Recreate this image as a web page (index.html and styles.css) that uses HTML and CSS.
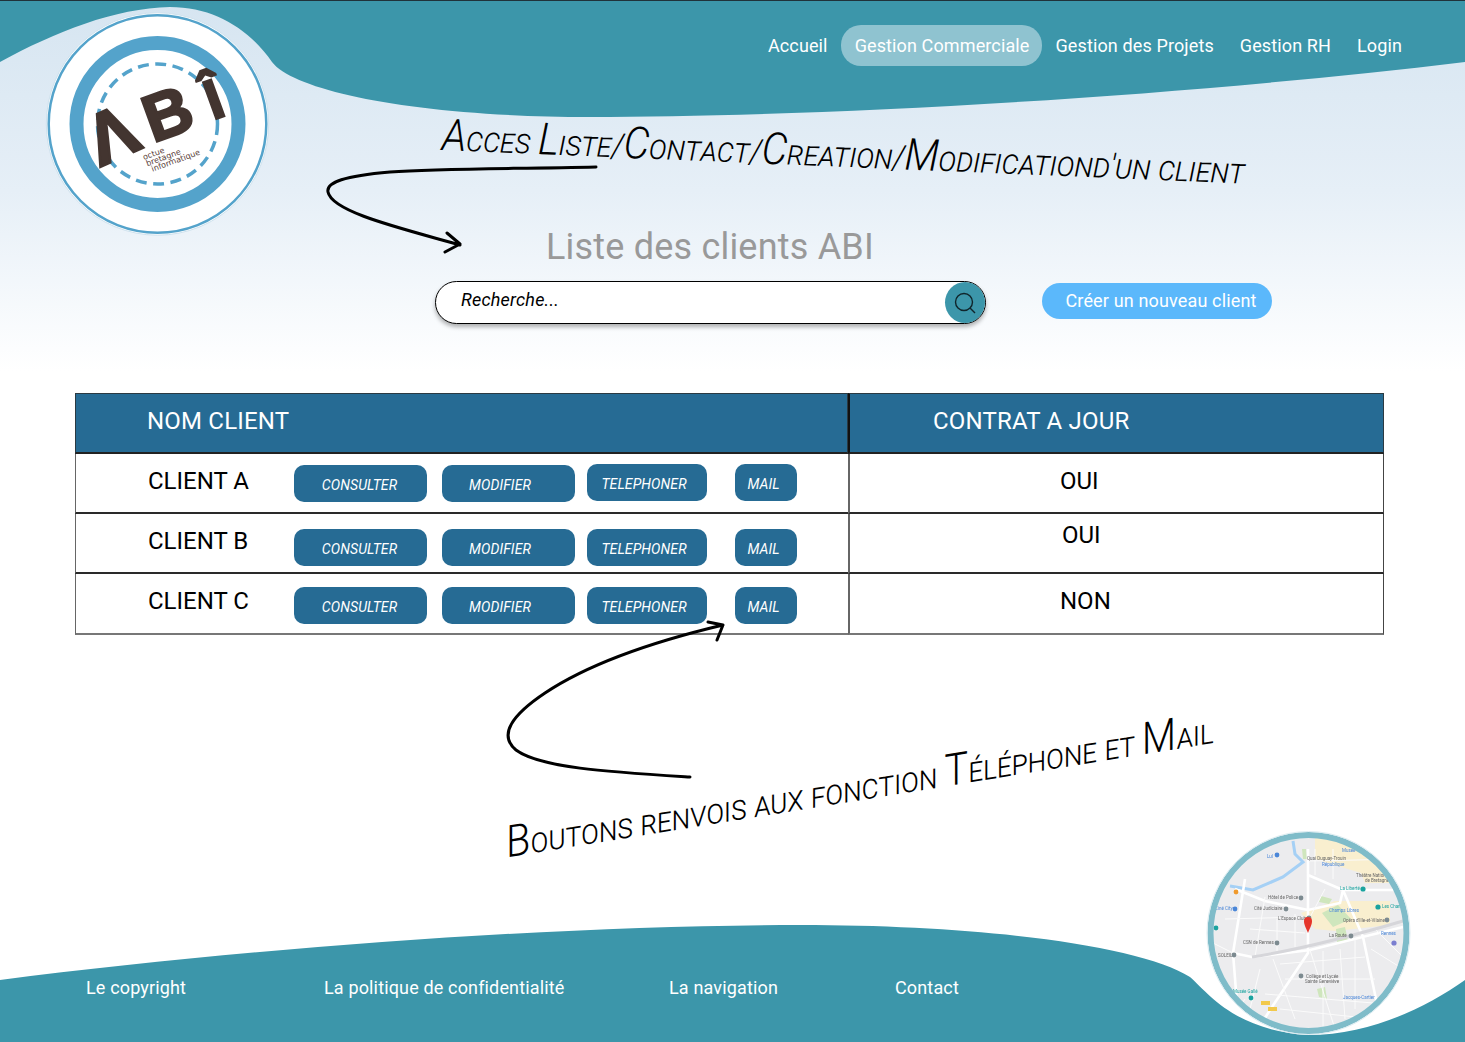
FILE: index.html
```html
<!DOCTYPE html>
<html>
<head>
	<meta charset="utf-8"/>
	<title>Liste des clients ABI</title>
	<link rel="stylesheet" href="styles.css">
</head>
<body>
<div class="page">
	<!-- background waves -->
	<svg class="canvas" width="1465" height="1042" viewBox="0 0 1465 1042">
		<path class="wave" d="M0 62 C55 32 115 8 170 7 C215 7 250 30 272 62 C295 92 420 117 590 117 C800 117 1150 100 1465 62 L1465 0 L0 0 Z"/>
		<path class="wave" d="M0 980 C250 948 560 925 800 925 C980 925 1140 945 1190 977 C1210 995 1235 1030 1308 1035 C1370 1035 1425 1008 1465 980 L1465 1042 L0 1042 Z"/>
	</svg>

	<header class="topbar">
		<nav class="nav">
			<a class="nav-link">Accueil</a>
			<a class="nav-link active">Gestion Commerciale</a>
			<a class="nav-link">Gestion des Projets</a>
			<a class="nav-link">Gestion RH</a>
			<a class="nav-link">Login</a>
		</nav>
	</header>

	<main class="content">
		<h1 class="title">Liste des clients ABI</h1>
		<div class="toolbar">
			<div class="search">
				<span class="search-text">Recherche...</span>
				<span class="search-btn">
					<svg width="24" height="24" viewBox="0 0 24 24"><circle cx="11" cy="11" r="8.5"/><path d="M17 17 L22 22"/></svg>
				</span>
			</div>
			<a class="create-btn">Créer un nouveau client</a>
		</div>

		<table class="clients">
			<thead>
				<tr>
					<th class="col-name">NOM CLIENT</th>
					<th class="col-contract">CONTRAT A JOUR</th>
				</tr>
			</thead>
			<tbody>
				<tr class="row-a">
					<td class="col-name">
						<div class="client-line">
							<span class="client-name">CLIENT A</span>
							<a class="btn btn-wide">CONSULTER</a>
							<a class="btn btn-wide btn-mod">MODIFIER</a>
							<a class="btn btn-tel">TELEPHONER</a>
							<a class="btn btn-mail">MAIL</a>
						</div>
					</td>
					<td class="col-contract">OUI</td>
				</tr>
				<tr class="row-b">
					<td class="col-name">
						<div class="client-line">
							<span class="client-name">CLIENT B</span>
							<a class="btn btn-wide">CONSULTER</a>
							<a class="btn btn-wide btn-mod">MODIFIER</a>
							<a class="btn btn-tel">TELEPHONER</a>
							<a class="btn btn-mail">MAIL</a>
						</div>
					</td>
					<td class="col-contract">OUI</td>
				</tr>
				<tr class="row-c">
					<td class="col-name">
						<div class="client-line">
							<span class="client-name">CLIENT C</span>
							<a class="btn btn-wide">CONSULTER</a>
							<a class="btn btn-wide btn-mod">MODIFIER</a>
							<a class="btn btn-tel">TELEPHONER</a>
							<a class="btn btn-mail">MAIL</a>
						</div>
					</td>
					<td class="col-contract">NON</td>
				</tr>
			</tbody>
		</table>
	</main>

	<footer class="footer">
		<a class="foot-link foot-copy">Le copyright</a>
		<a class="foot-link foot-policy">La politique de confidentialité</a>
		<a class="foot-link foot-nav">La navigation</a>
		<a class="foot-link">Contact</a>
	</footer>

	<!-- logo -->
	<svg class="logo" width="228" height="228" viewBox="0 0 228 228">
		<circle cx="113.5" cy="114" r="111.2" fill="#fff" stroke="#cfe2ee" stroke-width="1"/>
		<circle cx="113.5" cy="114" r="108.8" fill="#fff" stroke="#54a3cb" stroke-width="2.5"/>
		<circle cx="113.5" cy="114" r="81" fill="#fff" stroke="#54a3cb" stroke-width="14"/>
		<circle cx="113.5" cy="114" r="60" fill="none" stroke="#54a3cb" stroke-width="3.5" stroke-dasharray="11 6.5"/>
		<text class="logo-big" transform="translate(56 157) rotate(-24)" font-size="72">Λ</text>
		<text class="logo-big" transform="translate(109 133) rotate(-20)" font-size="66">B</text>
		<text class="logo-big" transform="translate(169 110) rotate(-20)" font-size="56">Î</text>
		<g class="logo-small" transform="translate(100 150) rotate(-20)">
			<text x="0" y="0">octue</text>
			<text x="1" y="7">bretagne</text>
			<text x="4" y="14">informatique</text>
		</g>
	</svg>

	<!-- map -->
	<svg class="map" width="208" height="208" viewBox="0 0 208 208">
		<defs>
			<clipPath id="map-clip"><circle cx="103.5" cy="104" r="98"/></clipPath>
		</defs>
		<g class="map-inner" clip-path="url(#map-clip)">
			<rect width="208" height="208" fill="#ececee"/>
			<path d="M110 8 L190 8 L190 54 L160 54 L156 44 L110 30 Z" fill="#f9efcf"/>
			<path d="M96 84 L130 72 L185 72 L185 96 L130 102 L110 100 Z" fill="#f9efcf"/>
			<path d="M117 84 L133 76 L146 90 L128 98 Z M116 67 L127 70 L124 75 L114 73 Z M131 100 L140 98 L143 112 L132 113 Z M112 160 L120 158 L122 170 L114 168 Z M97 20 L101 20 L102 30 L98 30 Z" fill="#cfe6bd"/>
			<path class="map-water" d="M25 57 L48 61 L78 48 L98 33 L90 25 L88 12"/>
			<path class="map-road-big" d="M103 20 L103 124 L65 181 L48 208 M28 124 L47 128 L105 121 L198 98 M103 46 L138 61 L158 108 L172 175 M138 61 L198 61 M103 81 L135 74 L138 61 M30 60 L60 72 L103 81 M40 50 L28 124 L34 200"/>
			<path class="map-road" d="M60 68 L50 128 M68 130 L90 190 M105 121 L130 200 M150 110 L150 180 M0 110 L28 124 M80 150 L170 150 M60 165 L180 175 M103 32 L200 30 M170 100 L200 130 M20 90 L100 88 M40 170 L20 200 M72 90 L72 122 M90 85 L90 118 M118 122 L118 200 M135 120 L140 190 M75 135 L160 128 M75 180 L170 190 M110 20 L110 46 M128 20 L128 50 M45 100 L100 104 M55 140 L40 200 M120 60 L104 90 M166 120 L198 140"/>
			<path d="M47 128 Q110 118 198 92" fill="none" stroke="#d6d6da" stroke-width="3"/>
			<text class="map-label map-blue" x="62" y="29">Lul</text>
			<text class="map-label" x="102" y="31">Quai Duguay-Trouin</text>
			<text class="map-label map-blue" x="117" y="37">République</text>
			<text class="map-label map-blue" x="137" y="23">Musée</text>
			<text class="map-label" x="151" y="48">Théâtre National</text>
			<text class="map-label" x="160" y="53">de Bretagne</text>
			<text class="map-label map-teal" x="135" y="61">La Liberté</text>
			<text class="map-label" x="63" y="70">Hôtel de Police</text>
			<text class="map-label" x="49" y="81">Cité Judiciaire</text>
			<text class="map-label" x="73" y="91">L'Espace Clubs</text>
			<text class="map-label map-blue" x="124" y="83">Champs Libres</text>
			<text class="map-label map-teal" x="177" y="79">Les Champs</text>
			<text class="map-label" x="138" y="93">Opéra d'Ille-et-Vilaine</text>
			<text class="map-label" x="124" y="108">La Route</text>
			<text class="map-label map-blue" x="176" y="106">Rennes</text>
			<text class="map-label" x="38" y="115">CSN de Rennes</text>
			<text class="map-label" x="13" y="128">SOLEIL</text>
			<text class="map-label" x="101" y="149">Collège et Lycée</text>
			<text class="map-label" x="100" y="154">Sainte Geneviève</text>
			<text class="map-label map-blue" x="138" y="170">Jacques-Cartier</text>
			<text class="map-label map-teal" x="28" y="164">Musée Gallé</text>
			<text class="map-label map-blue" x="10" y="81">Ciné City</text>
			<circle cx="72" cy="26" r="2.4" fill="#4a86d8"/>
			<circle cx="158" cy="60" r="2.6" fill="#1aa39f"/>
			<circle cx="173" cy="78" r="2.6" fill="#1aa39f"/>
			<circle cx="31" cy="63" r="2.4" fill="#f09a2d"/>
			<circle cx="30" cy="80" r="2.4" fill="#4a86d8"/>
			<circle cx="96" cy="69" r="2.4" fill="#7c8a90"/>
			<circle cx="81" cy="80" r="2.4" fill="#7c8a90"/>
			<circle cx="104" cy="89" r="2.4" fill="#7c8a90"/>
			<circle cx="182" cy="91" r="2.4" fill="#7c8a90"/>
			<circle cx="146" cy="107" r="2.4" fill="#7c8a90"/>
			<circle cx="72" cy="114" r="2.4" fill="#7c8a90"/>
			<circle cx="29" cy="126" r="2.4" fill="#7c8a90"/>
			<circle cx="96" cy="147" r="2.4" fill="#7c8a90"/>
			<circle cx="189" cy="114" r="2.6" fill="#7b7fd0"/>
			<circle cx="46" cy="169" r="2.4" fill="#1aa39f"/>
			<circle cx="11" cy="99" r="2.4" fill="#1aa39f"/>
			<rect x="56" y="172" width="9" height="4" fill="#f2c94c"/>
			<rect x="63" y="178" width="9" height="4" fill="#f2c94c"/>
			<path d="M103 104 C100 97 99 95 99 92 A4 4 0 0 1 107 92 C107 95 106 97 103 104 Z" fill="#e5352b"/>
		</g>
		<circle cx="103.5" cy="104" r="98" fill="none" stroke="#7fbcc9" stroke-width="6"/>
		<circle cx="103.5" cy="104" r="101.5" fill="none" stroke="#dcecf1" stroke-width="1"/>
	</svg>

	<!-- notes drawn over the mockup -->
	<svg class="canvas" width="1465" height="1042" viewBox="0 0 1465 1042">
		<path class="arrow" d="M596 167 C520 169 440 168 390 172 C345 176 326 182 328 192 C332 212 400 228 460 245 M447 233 L460 244 L445 252"/>
		<path class="arrow" d="M690 777 C610 772 540 768 516 750 C498 735 512 715 545 693 C590 663 660 640 723 625 M708 622 L723 625 L717 640"/>
	</svg>
	<div class="note note-top"><span class="note-cap">A</span>cces <span class="note-cap">L</span>iste/<span class="note-cap">C</span>ontact/<span class="note-cap">C</span>reation/<span class="note-cap">M</span>odificationd'un client</div>
	<div class="note note-bottom"><span class="note-cap">B</span>outons renvois aux fonction <span class="note-cap">T</span>éléphone et <span class="note-cap">M</span>ail</div>
</div>
</body>
</html>
```
FILE: styles.css
```css
*{
	box-sizing: border-box;
}
body{
	margin: 0;
	font-family: "Roboto", "Liberation Sans", sans-serif;
	color: #000;
}
.page{
	position: relative;
	width: 1465px;
	height: 1042px;
	overflow: hidden;
	border-top: 1px solid #20323a;
	background: linear-gradient(#d6e5f1 0, #e6eff7 190px, #ffffff 370px);
}
.canvas{
	position: absolute;
	left: 0;
	top: -1px;
}
.wave{
	fill: #3c96aa;
}
.arrow{
	fill: none;
	stroke: #000;
	stroke-width: 3;
	stroke-linecap: round;
	stroke-linejoin: round;
}

/* header */
.topbar{
	position: relative;
	padding-top: 24px;
}
.nav{
	display: flex;
	justify-content: flex-end;
	align-items: center;
	padding-right: 50px;
}
.nav-link{
	padding: 0 13px;
	font-size: 18px;
	line-height: 41px;
	letter-spacing: 0.12px;
	color: #fff;
}
.nav-link.active{
	padding: 0 13px 0 14px;
	border-radius: 20px;
	background: #8fc3d0;
}

/* title and search */
.content{
	position: relative;
}
.title{
	margin: 160px 0 13px 546px;
	font-size: 36px;
	line-height: 42px;
	font-weight: 400;
	letter-spacing: 0.2px;
	color: #999;
}
.toolbar{
	display: flex;
	align-items: flex-start;
	margin-left: 435px;
}
.search{
	display: flex;
	align-items: center;
	justify-content: space-between;
	width: 551px;
	height: 43px;
	border: 1px solid #000;
	border-radius: 22px;
	background: #fff;
	box-shadow: 0 3px 4px rgba(0,0,0,0.3);
}
.search-text{
	padding: 0 0 6px 25px;
	font-size: 18px;
	font-style: italic;
	letter-spacing: 0.2px;
}
.search-btn{
	display: flex;
	align-items: center;
	justify-content: center;
	width: 40px;
	height: 41px;
	border-radius: 50%;
	background: #3c96aa;
}
.search-btn svg{
	fill: none;
	stroke: #10252b;
	stroke-width: 1.4;
}
.create-btn{
	width: 230px;
	height: 36px;
	margin: 2px 0 0 56px;
	padding-left: 8px;
	border-radius: 18px;
	background: #5bb8fb;
	color: #fff;
	font-size: 18px;
	line-height: 36px;
	letter-spacing: 0.15px;
	text-align: center;
}

/* clients table */
.clients{
	width: 1309px;
	margin: 69px 0 0 75px;
	border-collapse: separate;
	border-spacing: 0;
	table-layout: fixed;
}
.clients th{
	height: 61px;
	padding: 0 0 5px 0;
	border: 1px solid #2b3a42;
	border-bottom: 2px solid #222;
	background: #266b94;
	color: #fff;
	font-size: 24px;
	font-weight: 400;
	letter-spacing: 0.2px;
	text-align: left;
}
.clients td{
	height: 60px;
	padding: 0;
	vertical-align: top;
	border-bottom: 2px solid #2a2a2a;
	border-left: 1px solid #666;
	background: #fff;
	font-size: 24px;
	line-height: 28px;
}
.clients .row-c td{
	height: 61px;
	border-bottom-color: #777;
}
.clients .col-name{
	width: 773px;
}
.clients th.col-name{
	padding-left: 71px;
}
.clients th.col-contract{
	padding-left: 83px;
	border-left: 2px solid #111;
}
.clients td.col-contract{
	padding: 13px 0 0 210px;
	border-left: 2px solid #666;
	border-right: 1px solid #444;
}
.clients .row-b td.col-contract{
	padding: 7px 0 0 212px;
}
.client-line{
	display: flex;
	align-items: flex-start;
	gap: 15px;
	padding-left: 72px;
}
.row-a .client-line{
	padding-top: 11px;
}
.row-b .client-line{
	padding-top: 15px;
}
.row-c .client-line{
	padding-top: 13px;
}
.client-name{
	width: 131px;
}
.row-a .client-name{
	margin-top: 2px;
}
.row-b .client-name{
	margin-top: -2px;
}
.btn{
	height: 37px;
	padding-right: 2px;
	border-radius: 10px;
	background: #266b94;
	color: #fff;
	font-size: 14px;
	font-style: italic;
	line-height: 41px;
	letter-spacing: 0.1px;
	text-align: center;
}
.btn-wide{
	width: 133px;
}
.btn-mod{
	padding-right: 17px;
}
.btn-tel{
	width: 120px;
	margin-left: -3px;
	padding-right: 6px;
}
.btn-mail{
	width: 62px;
	margin-left: 13px;
	padding-right: 5px;
}
.row-a .btn-tel,
.row-a .btn-mail{
	margin-top: -1px;
}

/* footer */
.footer{
	position: relative;
	display: flex;
	margin-top: 342px;
	padding-left: 86px;
}
.foot-link{
	font-size: 18px;
	line-height: 21px;
	letter-spacing: 0.15px;
	color: #fff;
}
.foot-copy{
	width: 238px;
}
.foot-policy{
	width: 345px;
}
.foot-nav{
	width: 226px;
}

/* logo and map sit over the waves */
.logo{
	position: absolute;
	left: 44px;
	top: 9px;
}
.logo-big{
	font-family: "Liberation Sans", sans-serif;
	font-weight: 700;
	fill: #433530;
	stroke: #433530;
	stroke-width: 2.5;
}
.logo-small{
	font-family: "DejaVu Sans", sans-serif;
	font-size: 8px;
	fill: #5a4038;
}
.map{
	position: absolute;
	left: 1205px;
	top: 828px;
}
.map-inner{
	filter: blur(0.35px);
}
.map-water{
	fill: none;
	stroke: #a5d0f5;
	stroke-width: 3;
}
.map-road-big{
	fill: none;
	stroke: #fff;
	stroke-width: 2.6;
}
.map-road{
	fill: none;
	stroke: #fbfbfb;
	stroke-width: 1;
}
.map-label{
	font-family: "Roboto", sans-serif;
	font-size: 4.5px;
	fill: #666;
}
.map-blue{
	fill: #4a86d8;
}
.map-teal{
	fill: #1aa39f;
}

/* handwritten notes */
.note{
	position: absolute;
	font-family: "Roboto", sans-serif;
	font-weight: 300;
	font-style: italic;
	font-variant: small-caps;
	white-space: nowrap;
	color: #000;
	transform-origin: 0 100%;
}
.note-cap{
	font-size: 1.3em;
}
.note-top{
	left: 441px;
	top: 108px;
	font-size: 34px;
	transform: rotate(2.4deg) scaleX(0.918);
}
.note-bottom{
	left: 510px;
	top: 815px;
	font-size: 34px;
	transform: rotate(-9.2deg) scaleX(0.93);
}
```
